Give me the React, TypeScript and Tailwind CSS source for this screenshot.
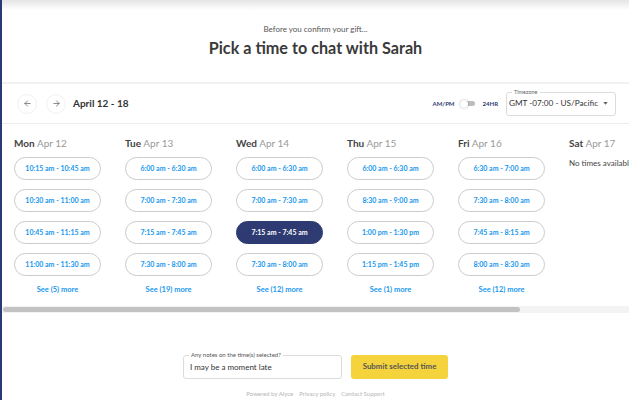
import React from "react";
import { ArrowLeft, ArrowRight } from "lucide-react";

interface DayColumn {
  day: string;
  date: string;
  slots: string[];
  more?: number;
}

const DAYS: DayColumn[] = [
  {
    day: "Mon",
    date: "Apr 12",
    slots: ["10:15 am - 10:45 am", "10:30 am - 11:00 am", "10:45 am - 11:15 am", "11:00 am - 11:30 am"],
    more: 5,
  },
  {
    day: "Tue",
    date: "Apr 13",
    slots: ["6:00 am - 6:30 am", "7:00 am - 7:30 am", "7:15 am - 7:45 am", "7:30 am - 8:00 am"],
    more: 19,
  },
  {
    day: "Wed",
    date: "Apr 14",
    slots: ["6:00 am - 6:30 am", "7:00 am - 7:30 am", "7:15 am - 7:45 am", "7:30 am - 8:00 am"],
    more: 12,
  },
  {
    day: "Thu",
    date: "Apr 15",
    slots: ["6:00 am - 6:30 am", "8:30 am - 9:00 am", "1:00 pm - 1:30 pm", "1:15 pm - 1:45 pm"],
    more: 1,
  },
  {
    day: "Fri",
    date: "Apr 16",
    slots: ["6:30 am - 7:00 am", "7:30 am - 8:00 am", "7:45 am - 8:15 am", "8:00 am - 8:30 am"],
    more: 12,
  },
  { day: "Sat", date: "Apr 17", slots: [] },
];

// selected slot: Wed, third row
const SELECTED = { day: "Wed", index: 2 };

function SlotButton({ label, selected }: { label: string; selected: boolean }) {
  return (
    <button
      className={
        selected
          ? "flex h-[23px] w-[87px] items-center justify-center rounded-full border border-[#2d3b72] bg-[#2d3b72] text-[7px] font-bold text-white"
          : "flex h-[23px] w-[87px] items-center justify-center rounded-full border border-[#cccccc] bg-white text-[7px] font-bold text-[#1898ee]"
      }
    >
      {label}
    </button>
  );
}

function DayList({ column }: { column: DayColumn }) {
  return (
    <div className="flex w-[111px] shrink-0 flex-col">
      <div className="whitespace-nowrap text-[10px] leading-[14px]">
        <span className="font-bold text-[#444]">{column.day}</span>{" "}
        <span className="text-[#9a9a9a]">{column.date}</span>
      </div>
      {column.slots.length === 0 ? (
        <div className="mt-[8px] whitespace-nowrap text-[8px] leading-[10px] text-[#444]">
          No times available
        </div>
      ) : (
        <>
          <div className="mt-[7px] flex flex-col gap-[9px]">
            {column.slots.map((slot, i) => (
              <SlotButton
                key={slot}
                label={slot}
                selected={column.day === SELECTED.day && i === SELECTED.index}
              />
            ))}
          </div>
          <div className="mt-[9px] w-[87px] text-center text-[7.5px] font-bold leading-[10px] text-[#1898ee]">
            See ({column.more}) more
          </div>
        </>
      )}
    </div>
  );
}

function Toolbar() {
  return (
    <div className="flex h-[39px] items-center justify-between pl-[15px] pr-[13px]">
      <div className="flex items-center">
        <button className="flex h-5 w-5 items-center justify-center rounded-full border border-[#f0f0f0] text-[#666]">
          <ArrowLeft size={9} strokeWidth={2} />
        </button>
        <button className="ml-[9px] flex h-5 w-5 items-center justify-center rounded-full border border-[#f0f0f0] text-[#666]">
          <ArrowRight size={9} strokeWidth={2} />
        </button>
        <span className="ml-[7px] text-[10px] font-bold text-[#333]">April 12 - 18</span>
      </div>
      <div className="flex items-center">
        <span className="text-[6px] font-bold text-[#2d3b72]">AM/PM</span>
        <div className="relative ml-[5px] flex h-[8px] w-[15px] items-center">
          <div className="h-[5px] w-full rounded-full bg-[#bdbdbd]" />
          <div className="absolute left-0 top-0 h-[8px] w-[8px] rounded-full bg-white shadow-[0_0_2px_rgba(0,0,0,0.35)]" />
        </div>
        <span className="ml-[8px] text-[6px] font-bold text-[#2d3b72]">24HR</span>
        <div className="relative ml-[8px] flex h-[24px] w-[110px] items-center rounded-[3px] border border-[#dcdcdc] pl-[2px] pr-[7px]">
          <span className="absolute left-[5px] top-[-5px] bg-white px-[2px] text-[5.5px] leading-[8px] text-[#666]">
            Timezone
          </span>
          <span className="flex-1 whitespace-nowrap text-[8.2px] text-[#333]">GMT -07:00 - US/Pacific</span>
          <svg width="5" height="3" viewBox="0 0 6 4" className="shrink-0">
            <path d="M0 0 L6 0 L3 3.5 Z" fill="#666" />
          </svg>
        </div>
      </div>
    </div>
  );
}

export default function App() {
  return (
    <div className="relative h-[400px] w-[629px] overflow-hidden border-l-2 border-[#2b3a75] bg-white font-['Lato','Liberation_Sans',sans-serif]">
      {/* header */}
      <div className="flex h-[82px] flex-col items-center">
        <div className="h-[10px] w-full bg-gradient-to-b from-[#e4e4e4] to-white" />
        <div className="mt-[14px] text-[8px] leading-[10px] text-[#555]">Before you confirm your gift...</div>
        <h1 className="mt-[3px] text-[16.2px] font-bold leading-[22px] text-[#3a3a3a]">
          Pick a time to chat with Sarah
        </h1>
      </div>
      <div className="h-[2px] bg-[#f1f1f1]" />

      <Toolbar />
      <div className="h-px bg-[#ececec]" />

      {/* days */}
      <div className="flex overflow-hidden pl-[12px] pt-[12px]">
        {DAYS.map((column) => (
          <DayList key={column.day} column={column} />
        ))}
      </div>

      {/* scrollbar */}
      <div className="mt-[11px] flex h-[7px] items-center bg-[#f3f3f3] px-[1px]">
        <div className="h-[5px] w-[517px] rounded-full bg-[#c2c2c2]" />
      </div>

      {/* notes + submit */}
      <div className="mt-[42px] flex justify-center gap-[9px]">
        <div className="relative flex h-[24px] w-[159px] items-center rounded-[3px] border border-[#dcdcdc] px-[6px]">
          <span className="absolute left-[5px] top-[-5px] bg-white px-[2px] text-[6px] leading-[8px] text-[#555]">
            Any notes on the time(s) selected?
          </span>
          <span className="text-[8px] text-[#333]">I may be a moment late</span>
        </div>
        <button className="flex h-[24px] w-[97px] items-center justify-center rounded-[3px] bg-[#f5d33c] text-[7.9px] font-bold text-[#555]">
          Submit selected time
        </button>
      </div>

      <div className="mt-[11px] flex justify-center gap-[6px] text-[6px] leading-[8px] text-[#b5b5b5]">
        <span>Powered by Alyce</span>
        <span>Privacy policy</span>
        <span>Contact Support</span>
      </div>
    </div>
  );
}
